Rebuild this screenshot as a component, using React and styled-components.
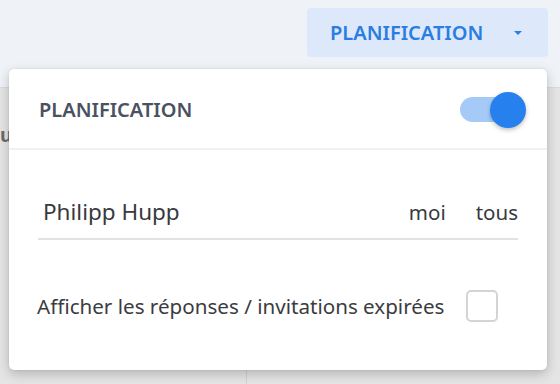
import React, { useState } from 'react'
import styled, { createGlobalStyle } from 'styled-components'

const GlobalStyle = createGlobalStyle`
  html, body {
    margin: 0;
    padding: 0;
    width: 560px;
    height: 384px;
    overflow: hidden;
    font-family: "Noto Sans", "Liberation Sans", sans-serif;
  }
`

const Page = styled.div`
  position: relative;
  width: 560px;
  height: 384px;
  display: flex;
  flex-direction: column;
  background: #e5e5e6;
`

const TopBar = styled.div`
  height: 88px;
  box-sizing: border-box;
  background: #eff2f7;
  border-bottom: 1px solid #d9dbde;
  display: flex;
  justify-content: flex-end;
  align-items: flex-start;
  padding: 8px 12px 0 0;
`

const MenuButton = styled.button`
  width: 241px;
  height: 49px;
  border: none;
  border-radius: 4px;
  background: #dde9fb;
  color: #2a7de1;
  font-family: inherit;
  font-size: 20px;
  font-weight: 600;
  display: flex;
  align-items: center;
  justify-content: space-between;
  padding: 0 26px 0 23px;
  cursor: pointer;
`

const Caret = styled.span`
  width: 0;
  height: 0;
  border-left: 4px solid transparent;
  border-right: 4px solid transparent;
  border-top: 4px solid #2a7de1;
`

const Body = styled.div`
  flex: 1;
  display: grid;
  grid-template-columns: 247px 1fr;
`

const Column = styled.div`
  border-right: ${p => (p.divided ? '1px solid #d2d2d3' : 'none')};
  padding-top: 34px;
  color: #6c6c6e;
  font-size: 19px;
  font-weight: 700;
`

const Popover = styled.div`
  position: absolute;
  left: 9px;
  top: 69px;
  width: 538px;
  height: 301px;
  box-sizing: border-box;
  background: #ffffff;
  border-radius: 5px;
  box-shadow: 0 4px 12px rgba(0, 0, 0, 0.22), 0 0 2px rgba(0, 0, 0, 0.1);
  display: flex;
  flex-direction: column;
`

const PopoverHeader = styled.div`
  height: 81px;
  box-sizing: border-box;
  border-bottom: 2px solid #f0f1f3;
  display: flex;
  align-items: center;
  justify-content: space-between;
  padding: 2px 25px 0 30px;
`

const HeaderTitle = styled.span`
  color: #4a5160;
  font-size: 20px;
  font-weight: 600;
`

const SwitchTrack = styled.div`
  position: relative;
  width: 62px;
  height: 25px;
  border-radius: 13px;
  background: ${p => (p.on ? '#a6caf8' : '#d6d6d6')};
  cursor: pointer;
`

const SwitchKnob = styled.div`
  position: absolute;
  top: -5px;
  left: ${p => (p.on ? '30px' : '-6px')};
  width: 36px;
  height: 36px;
  border-radius: 50%;
  background: ${p => (p.on ? '#2681ef' : '#f5f5f5')};
  box-shadow: 0 2px 4px rgba(0, 0, 0, 0.25);
`

const PersonRow = styled.div`
  margin: 41px 29px 0 29px;
  height: 49px;
  box-sizing: border-box;
  border-bottom: 2px solid #e2e2e4;
  display: flex;
  align-items: center;
  color: #38393c;
  padding: 0 0 6px 5px;
`

const PersonName = styled.span`
  flex: 1;
  font-size: 22.5px;
`

const Choice = styled.span`
  font-size: 20.5px;
  margin-left: ${p => p.gap || 0}px;
`

const OptionRow = styled.label`
  display: flex;
  align-items: center;
  margin: 50px 0 0 28px;
  color: #3b3c3f;
  font-size: 20.6px;
  cursor: pointer;
`

const Checkbox = styled.span`
  width: 32px;
  height: 32px;
  box-sizing: border-box;
  margin-left: 22px;
  border: 2px solid #d4d4d6;
  border-radius: 5px;
  background: #fff;
`

export default function App() {
  const [on, setOn] = useState(true)
  return (
    <Page>
      <GlobalStyle />
      <TopBar>
        <MenuButton>
          PLANIFICATION
          <Caret />
        </MenuButton>
      </TopBar>
      <Body>
        <Column divided>u</Column>
        <Column />
      </Body>
      <Popover>
        <PopoverHeader>
          <HeaderTitle>PLANIFICATION</HeaderTitle>
          <SwitchTrack on={on ? 1 : 0} onClick={() => setOn(!on)}>
            <SwitchKnob on={on ? 1 : 0} />
          </SwitchTrack>
        </PopoverHeader>
        <PersonRow>
          <PersonName>Philipp Hupp</PersonName>
          <Choice>moi</Choice>
          <Choice gap={30}>tous</Choice>
        </PersonRow>
        <OptionRow>
          Afficher les réponses / invitations expirées
          <Checkbox />
        </OptionRow>
      </Popover>
    </Page>
  )
}
